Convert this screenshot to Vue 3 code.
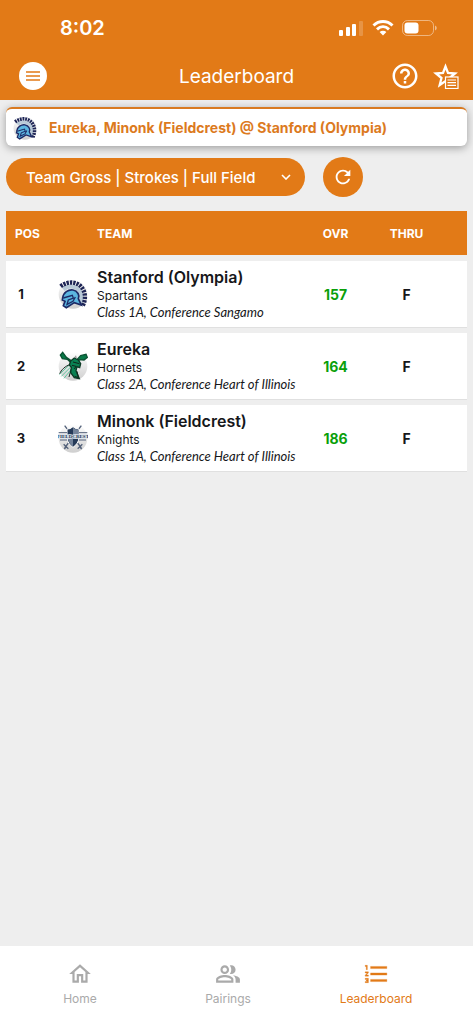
<template>
  <div class="app">
    <header class="header">
      <div class="status-bar">
        <span class="clock">8:02</span>
        <div class="status-icons">
          <svg width="25" height="15" viewBox="0 0 25 15" fill="#fff">
            <rect x="0" y="9" width="4" height="6" rx="1" />
            <rect x="7" y="6" width="4" height="9" rx="1" />
            <rect x="13" y="3" width="4" height="12" rx="1" />
            <rect x="20" y="0" width="4" height="15" rx="1" opacity="0.2" />
          </svg>
          <svg width="22" height="16" viewBox="0 0 22 16" fill="none" stroke="#fff" stroke-width="3">
            <path d="M1.5 5.5C7 .3 15 .3 20.5 5.5" />
            <path d="M5 9.3C8.6 6 13.4 6 17 9.3" />
            <path d="M11 15.5L7.6 12.1C9.5 10.4 12.5 10.4 14.4 12.1Z" fill="#fff" stroke="none" />
          </svg>
          <svg width="35" height="16" viewBox="0 0 35 16">
            <rect x="0.5" y="0.5" width="31" height="15" rx="5" fill="none" stroke="#fff" stroke-opacity="0.45" />
            <rect x="2.5" y="2.5" width="14" height="11" rx="3" fill="#fff" />
            <path d="M33 5.5q1.8 .8 1.8 2.5t-1.8 2.5z" fill="#fff" opacity="0.5" />
          </svg>
        </div>
      </div>
      <div class="toolbar">
        <button class="menu-button" aria-label="Menu">
          <svg width="14" height="10" viewBox="0 0 14 10" stroke="#e27a17" stroke-width="1.4">
            <path d="M0 1h14M0 5h14M0 9h14" />
          </svg>
        </button>
        <h1>Leaderboard</h1>
        <div class="actions">
          <button class="icon-button" aria-label="Help">
            <svg width="30" height="30" viewBox="0 0 24 24" fill="#fff">
              <path d="M11 18h2v-2h-2v2zm1-16C6.48 2 2 6.48 2 12s4.48 10 10 10 10-4.48 10-10S17.52 2 12 2zm0 18c-4.41 0-8-3.59-8-8s3.59-8 8-8 8 3.59 8 8-3.59 8-8 8zm0-14c-2.21 0-4 1.79-4 4h2c0-1.1.9-2 2-2s2 .9 2 2c0 2-3 1.75-3 5h2c0-2.25 3-2.5 3-5 0-2.21-1.79-4-4-4z" />
            </svg>
          </button>
          <button class="icon-button" aria-label="Favorites">
            <svg width="26" height="26" viewBox="0 0 26 26">
              <path d="M12.5 3.5l2.5 6.5 7 .5-5.5 4.5 1.8 7-5.8-3.9-5.8 3.9 1.8-7L3 10.5l7-.5z" fill="none" stroke="#fff" stroke-width="2.3" />
              <rect x="12.5" y="14" width="12.5" height="11.5" fill="#e27a17" stroke="#fff" stroke-width="1.2" />
              <path d="M14.5 17h8.5M14.5 19.7h8.5M14.5 22.4h8.5" stroke="#fff" stroke-width="1.2" />
            </svg>
          </button>
        </div>
      </div>
    </header>

    <main class="content">
      <a class="event" href="#">
        <svg class="event-logo" viewBox="0 0 90 90"><use href="#logo-spartans" /></svg>
        <span>Eureka, Minonk (Fieldcrest) @ Stanford (Olympia)</span>
      </a>

      <div class="filters">
        <div class="select-wrap">
          <select v-model="view" aria-label="Leaderboard view">
            <option>Team Gross | Strokes | Full Field</option>
          </select>
          <svg class="chevron" width="10" height="6" viewBox="0 0 10 6" fill="none" stroke="#fff" stroke-width="1.6">
            <path d="M1 1l4 4 4-4" />
          </svg>
        </div>
        <button class="refresh" aria-label="Refresh">
          <svg width="22" height="22" viewBox="0 0 24 24" fill="#fff">
            <path d="M17.65 6.35C16.2 4.9 14.21 4 12 4c-4.42 0-7.99 3.58-7.99 8s3.57 8 7.99 8c3.73 0 6.84-2.55 7.73-6h-2.08c-.82 2.33-3.04 4-5.65 4-3.31 0-6-2.69-6-6s2.69-6 6-6c1.66 0 3.14.69 4.22 1.78L13 11h7V4l-2.35 2.35z" />
          </svg>
        </button>
      </div>

      <table class="board">
        <thead>
          <tr>
            <th class="pos">POS</th>
            <th class="logo"></th>
            <th class="team">TEAM</th>
            <th class="ovr">OVR</th>
            <th class="thru">THRU</th>
            <th class="end"></th>
          </tr>
        </thead>
        <tbody>
          <tr v-for="row in rows" :key="row.pos">
            <td class="pos">{{ row.pos }}</td>
            <td class="logo">
              <svg viewBox="0 0 90 90"><use :href="'#logo-' + row.logo" /></svg>
            </td>
            <td class="team">
              <div class="name">{{ row.team }}</div>
              <div class="mascot">{{ row.mascot }}</div>
              <div class="division">{{ row.division }}</div>
            </td>
            <td class="ovr">{{ row.score }}</td>
            <td class="thru">{{ row.thru }}</td>
            <td class="end"></td>
          </tr>
        </tbody>
      </table>
    </main>

    <nav class="tabs">
      <a class="tab" href="#">
        <svg width="26" height="26" viewBox="0 0 24 24" fill="currentColor">
          <path d="M12 5.69l5 4.5V18h-2v-6H9v6H7v-7.81l5-4.5M12 3L2 12h3v8h6v-6h2v6h6v-8h3L12 3z" />
        </svg>
        <span>Home</span>
      </a>
      <a class="tab" href="#">
        <svg width="26" height="26" viewBox="0 0 24 24" fill="currentColor">
          <path d="M16.5 13.13C18.04 14.06 19 15.32 19 17v3h4v-3c0-2.18-3.58-3.47-6.5-3.87zM15 12c2.21 0 4-1.79 4-4s-1.79-4-4-4c-.47 0-.91.1-1.33.24C14.5 5.27 15 6.58 15 8s-.5 2.73-1.33 3.76c.42.14.86.24 1.33.24zM9 12c2.21 0 4-1.79 4-4s-1.79-4-4-4-4 1.79-4 4 1.79 4 4 4zm0-6c1.1 0 2 .9 2 2s-.9 2-2 2-2-.9-2-2 .9-2 2-2zM9 13c-2.67 0-8 1.34-8 4v3h16v-3c0-2.66-5.33-4-8-4zm6 5H3v-.99C3.2 16.29 6.3 15 9 15s5.8 1.29 6 2v1z" />
        </svg>
        <span>Pairings</span>
      </a>
      <a class="tab active" href="#">
        <svg width="26" height="26" viewBox="0 0 24 24" fill="currentColor" stroke="currentColor" stroke-width="0.3">
          <path d="M2 17h2v.5H3v1h1v.5H2v1h3v-4H2v1zm1-9h1V4H2v1h1v3zm-1 3h1.8L2 13.1v.9h3v-1H3.2L5 10.9V10H2v1zm5-6v2h15V5H7zm0 14h15v-2H7v2zm0-6h15v-2H7v2z" />
        </svg>
        <span>Leaderboard</span>
      </a>
    </nav>

    <svg class="sprites" aria-hidden="true">
      <defs>
        <linearGradient id="disc" x1="0" y1="0" x2="0" y2="1">
          <stop offset="0" stop-color="#fff" />
          <stop offset="1" stop-color="#cfcfcf" />
        </linearGradient>
        <symbol id="logo-spartans" viewBox="0 0 90 90">
          <circle cx="45" cy="46" r="43" fill="url(#disc)" />
          <path d="M16 31C32 17 58 20 68 41C74 53 72 66 67 76" fill="none" stroke="#b9cad8" stroke-width="13" />
          <path d="M8 22C31 4 64 6 77 35C83 49 82 66 74 80" fill="none" stroke="#1d2455" stroke-width="13" stroke-dasharray="7 3" />
          <path d="M14 57C16 40 31 31 45 33C59 36 66 49 61 59L70 78L49 71L25 86L16 80L21 67L13 63Z" fill="#5cb6e0" stroke="#1d2a66" stroke-width="5" />
          <path d="M16 57L43 49L46 57L31 63L27 76L45 67L52 54" fill="none" stroke="#1d2a66" stroke-width="4" />
        </symbol>
        <symbol id="logo-hornets" viewBox="0 0 90 90">
          <circle cx="45" cy="46" r="43" fill="url(#disc)" />
          <path d="M34 42L4 70M39 47L10 76M41 54L18 82" stroke="#5ec6a0" stroke-width="3" />
          <path d="M38 40C21 45 10 57 5 68M40 53L33 78" fill="none" stroke="#17251f" stroke-width="3" />
          <path d="M39 29L25 19L14 4L7 12L13 23L28 25L39 35ZM55 28L68 14L84 10L88 19L78 27L65 26L57 35Z" fill="#087a48" stroke="#0c5233" stroke-width="4" />
          <path d="M38 30L49 21L61 27L68 38L65 50L57 47L54 59L64 83L49 80L38 65L40 49L34 42Z" fill="#098152" stroke="#0c3a25" stroke-width="4" />
          <path d="M45 33L64 38M42 43L54 46L49 54M57 61L61 80L50 76" fill="none" stroke="#10271b" stroke-width="3" />
          <path d="M49 19L54 13L57 23" fill="#999" />
        </symbol>
        <symbol id="logo-knights" viewBox="0 0 90 90">
          <circle cx="45" cy="46" r="43" fill="url(#disc)" />
          <path d="M20 8L70 75M70 8L20 75M17 64L31 77M59 77L73 64M19 78L26 70M71 78L64 70" stroke="#53617a" stroke-width="4" />
          <path d="M27 18Q37 19 45 11Q53 19 63 18V45Q61 62 45 73Q29 62 27 45Z" fill="#263b59" stroke="#fff" stroke-width="3" />
          <path d="M45 14Q53 20 61 20V42H45ZM29 43H45V70Q31 61 29 43Z" fill="#74849b" />
          <text x="45" y="46" text-anchor="middle" font-family="Liberation Serif, serif" font-size="15" font-weight="700" fill="#223653" stroke="#dfe5ec" stroke-width="5" paint-order="stroke">FIELDCREST</text>
          <path d="M2 29H27M63 29H88M6 51H27M63 51H84" stroke="#53617a" stroke-width="3" />
        </symbol>
      </defs>
    </svg>
  </div>
</template>

<script setup>
import { ref } from 'vue'

const view = ref('Team Gross | Strokes | Full Field')

const rows = [
  { pos: 1, team: 'Stanford (Olympia)', mascot: 'Spartans', division: 'Class 1A, Conference Sangamo', score: 157, thru: 'F', logo: 'spartans' },
  { pos: 2, team: 'Eureka', mascot: 'Hornets', division: 'Class 2A, Conference Heart of Illinois', score: 164, thru: 'F', logo: 'hornets' },
  { pos: 3, team: 'Minonk (Fieldcrest)', mascot: 'Knights', division: 'Class 1A, Conference Heart of Illinois', score: 186, thru: 'F', logo: 'knights' }
]
</script>

<style>
body {
  margin: 0;
  background: #eee;
}
</style>

<style scoped>
.app {
  display: flex;
  flex-direction: column;
  min-height: 100vh;
  background: #eee;
  color: #16171a;
  font-family: Inter, sans-serif;
}

svg {
  display: block;
}

button {
  display: flex;
  align-items: center;
  justify-content: center;
  padding: 0;
  border: 0;
  background: none;
  cursor: pointer;
}

.header {
  padding-bottom: 4px;
  background: #e27a17;
  color: #fff;
}

.status-bar {
  display: flex;
  align-items: center;
  justify-content: space-between;
  height: 56px;
  padding: 0 36px 0 60px;
}

.clock {
  font-size: 20px;
  font-weight: 600;
}

.status-icons {
  display: flex;
  align-items: center;
  gap: 8px;
}

.toolbar {
  display: grid;
  grid-template-columns: 1fr auto 1fr;
  align-items: center;
  height: 40px;
  padding: 0 14px;
}

.menu-button {
  width: 28px;
  height: 28px;
  margin-left: 5px;
  border-radius: 50%;
  background: #fff;
}

h1 {
  margin: 0;
  font-size: 19px;
  font-weight: 400;
}

.actions {
  display: flex;
  align-items: center;
  justify-content: flex-end;
  gap: 13px;
}

.content {
  flex: 1;
  padding: 7px 6px;
}

.event {
  display: flex;
  align-items: center;
  gap: 12px;
  box-sizing: border-box;
  height: 39px;
  padding: 0 7px;
  border-top: 2px solid #d97a20;
  border-radius: 6px;
  background: #fff;
  box-shadow: 0 2px 8px rgba(0, 0, 0, 0.35);
  color: #dc7a1e;
  font-size: 14px;
  font-weight: 700;
  text-decoration: none;
}

.event-logo {
  width: 24px;
  height: 24px;
}

.filters {
  display: flex;
  align-items: center;
  gap: 18px;
  margin-top: 11px;
}

.select-wrap {
  position: relative;
  flex: 0 1 299px;
}

select {
  appearance: none;
  width: 100%;
  height: 38px;
  padding: 0 36px 0 20px;
  border: 0;
  border-radius: 19px;
  background: #e27a17;
  color: #fff;
  font-family: inherit;
  font-size: 15px;
  font-weight: 500;
}

.chevron {
  position: absolute;
  top: 16px;
  right: 14px;
  pointer-events: none;
}

.refresh {
  width: 40px;
  height: 40px;
  border-radius: 50%;
  background: #e27a17;
}

.board {
  width: 100%;
  margin-top: 8px;
  border-collapse: separate;
  border-spacing: 0 6px;
  table-layout: fixed;
}

th,
td {
  padding: 0;
}

th {
  height: 44px;
  background: #e27a17;
  color: #fff;
  font-size: 12px;
  font-weight: 700;
}

td {
  height: 66px;
  background: #fff;
  box-shadow: 0 1px 0 #e0e0e0;
  font-size: 14px;
  font-weight: 700;
}

.pos {
  width: 50px;
}

th.pos {
  padding-left: 9px;
  text-align: left;
  box-sizing: border-box;
}

td.pos {
  padding-right: 20px;
  box-sizing: border-box;
  text-align: center;
  font-size: 13px;
}

.logo {
  width: 41px;
}

.logo svg {
  width: 30px;
  height: 30px;
  margin-left: 2px;
}

.team {
  text-align: left;
}

.name {
  font-size: 16px;
  font-weight: 600;
  line-height: 20px;
  white-space: nowrap;
}

.mascot {
  font-size: 12px;
  font-weight: 400;
  line-height: 17px;
}

.division {
  font-family: Lato, sans-serif;
  font-size: 13px;
  font-style: italic;
  font-weight: 400;
  line-height: 17px;
  white-space: nowrap;
}

.ovr,
.thru {
  width: 71px;
  text-align: center;
}

td.ovr {
  color: #0a9f0a;
}

.end {
  width: 25px;
}

.tabs {
  display: flex;
  justify-content: center;
  height: 78px;
  padding-right: 17px;
  background: #fff;
}

.tab {
  display: flex;
  flex-direction: column;
  align-items: center;
  gap: 4px;
  flex: 0 1 148px;
  padding-top: 15px;
  color: #aaa;
  font-size: 12px;
  line-height: 16px;
  text-decoration: none;
}

.tab.active {
  color: #e27a17;
}

.sprites {
  position: absolute;
  width: 0;
  height: 0;
}
</style>
